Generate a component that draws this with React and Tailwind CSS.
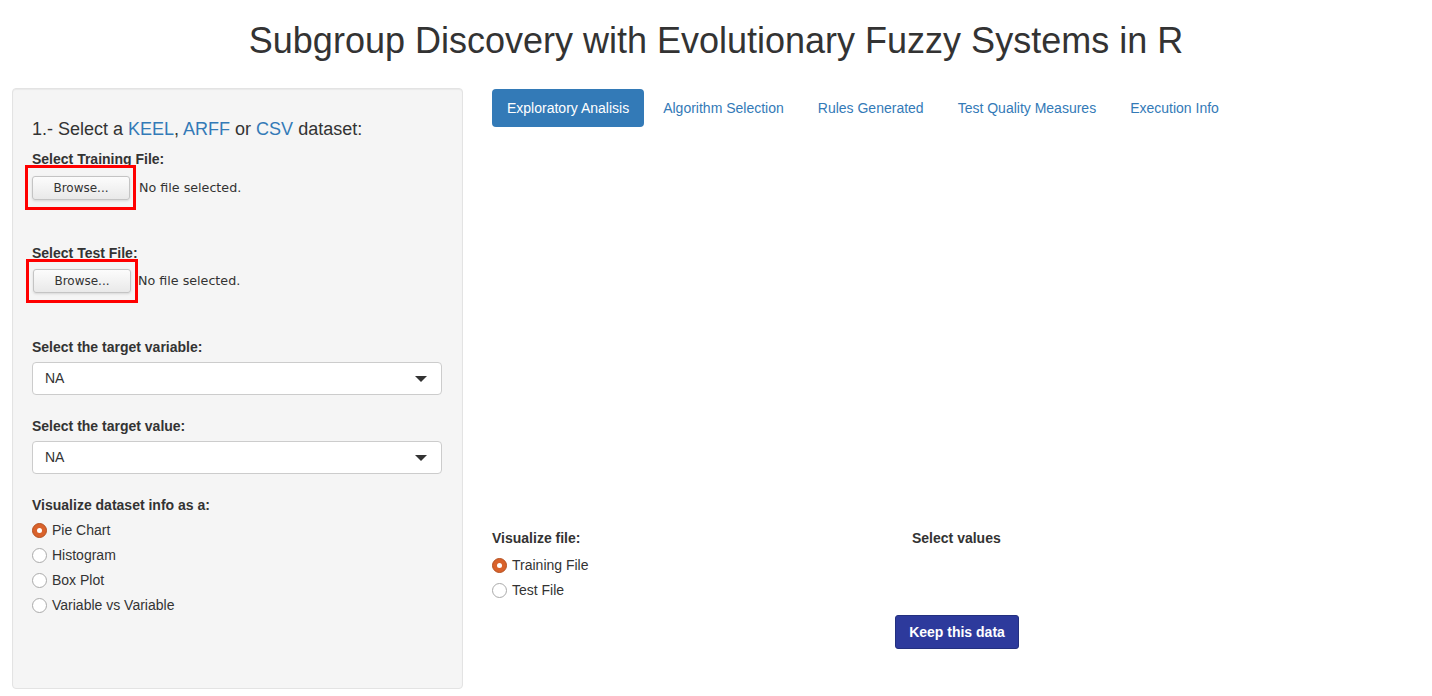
import React, { useState } from 'react';

const sans = { fontFamily: '"Liberation Sans", Arial, sans-serif' };
const dejavu = { fontFamily: '"DejaVu Sans", sans-serif' };

function Radio({ checked, label, onClick }) {
  return (
    <label className="flex items-center h-[25px] text-[14px] text-[#333] cursor-pointer" onClick={onClick}>
      <span className={`w-[15px] h-[15px] rounded-full mr-[5px] flex items-center justify-center ${checked ? 'bg-[#d9622b] border border-[#b5501f]' : 'bg-white border border-[#aaa]'}`}>
        {checked && <span className="w-[5px] h-[5px] rounded-full bg-white" />}
      </span>
      {label}
    </label>
  );
}

function SelectBox({ label }) {
  return (
    <div>
      <div className="text-[14px] font-bold text-[#333] leading-[20px] mb-[5px]">{label}</div>
      <div className="h-[33px] w-[410px] bg-white border border-[#ccc] rounded-[4px] flex items-center justify-between px-[12px]">
        <span className="text-[14px] text-[#333]">NA</span>
        <svg width="12" height="6" viewBox="0 0 12 6" className="mr-[2px]"><path d="M0 0 L12 0 L6 6 Z" fill="#333" /></svg>
      </div>
    </div>
  );
}

export default function App() {
  const [viz, setViz] = useState('Pie Chart');
  const [file, setFile] = useState('Training File');
  const tabs = ['Exploratory Analisis', 'Algorithm Selection', 'Rules Generated', 'Test Quality Measures', 'Execution Info'];

  return (
    <div className="w-[1432px] h-[696px] bg-white overflow-hidden" style={sans}>
      <h1 className="text-center text-[36px] text-[#333] leading-[40px] pt-[21px] pb-[27px]">Subgroup Discovery with Evolutionary Fuzzy Systems in R</h1>

      <div className="flex pl-[12px]">
        <div className="w-[451px] h-[601px] bg-[#f5f5f5] border border-[#e3e3e3] rounded-[4px] shadow-[inset_0_1px_1px_rgba(0,0,0,0.05)] pl-[19px] pt-[28px]">
          <div className="text-[18px] text-[#333] leading-[24px] mb-[8px]">
            1.- Select a <span className="text-[#337ab7]">KEEL</span>, <span className="text-[#337ab7]">ARFF</span> or <span className="text-[#337ab7]">CSV</span> dataset:
          </div>

          <div className="text-[14px] font-bold text-[#333] leading-[20px] -mb-[4px]">Select Training File:</div>
          <div className="flex items-center -ml-[7px]">
            <div className="border-[3px] border-[#ff0000] w-[111px] h-[45px] flex items-center pl-[4px]">
              <button className="h-[24px] w-[98px] rounded-[3px] border border-[#c4c4c4] bg-gradient-to-b from-[#fcfcfc] to-[#e9e9e9] text-[12px] text-[#333] shadow-sm" style={dejavu}>Browse...</button>
            </div>
            <span className="text-[12.7px] text-[#333] ml-[3px]" style={dejavu}>No file selected.</span>
          </div>

          <div className="text-[14px] font-bold text-[#333] leading-[20px] -mb-[4px] mt-[33px]">Select Test File:</div>
          <div className="flex items-center -ml-[6px]">
            <div className="border-[3px] border-[#ff0000] w-[112px] h-[44px] flex items-center pl-[4px]">
              <button className="h-[24px] w-[98px] rounded-[3px] border border-[#c4c4c4] bg-gradient-to-b from-[#fcfcfc] to-[#e9e9e9] text-[12px] text-[#333] shadow-sm" style={dejavu}>Browse...</button>
            </div>
            <span className="text-[12.7px] text-[#333]" style={dejavu}>No file selected.</span>
          </div>

          <div className="mt-[34px]">
            <SelectBox label="Select the target variable:" />
          </div>
          <div className="mt-[21px]">
            <SelectBox label="Select the target value:" />
          </div>

          <div className="mt-[21px]">
            <div className="text-[14px] font-bold text-[#333] leading-[20px] mb-[3px]">Visualize dataset info as a:</div>
            {['Pie Chart', 'Histogram', 'Box Plot', 'Variable vs Variable'].map(o => (
              <Radio key={o} label={o} checked={viz === o} onClick={() => setViz(o)} />
            ))}
          </div>
        </div>

        <div className="ml-[29px] flex-1 flex flex-col">
          <div className="flex items-center mt-[1px]">
            {tabs.map((t, i) => (
              <div key={t} className={`h-[38px] flex items-center px-[15px] text-[14px] rounded-[4px] mr-[4px] ${i === 0 ? 'bg-[#337ab7] text-white' : 'text-[#337ab7]'}`}>{t}</div>
            ))}
          </div>

          <div className="mt-[401px] flex">
            <div className="w-[420px]">
              <div className="text-[14px] font-bold text-[#333] leading-[20px] mb-[5px]">Visualize file:</div>
              {['Training File', 'Test File'].map(o => (
                <Radio key={o} label={o} checked={file === o} onClick={() => setFile(o)} />
              ))}
            </div>
            <div className="flex flex-col">
              <div className="text-[14px] font-bold text-[#333] leading-[20px]">Select values</div>
              <button className="mt-[67px] -ml-[17px] h-[34px] w-[124px] rounded-[3px] bg-[#2d3a9c] border border-[#23307f] text-white text-[14px] font-bold">Keep this data</button>
            </div>
          </div>
        </div>
      </div>
    </div>
  );
}
